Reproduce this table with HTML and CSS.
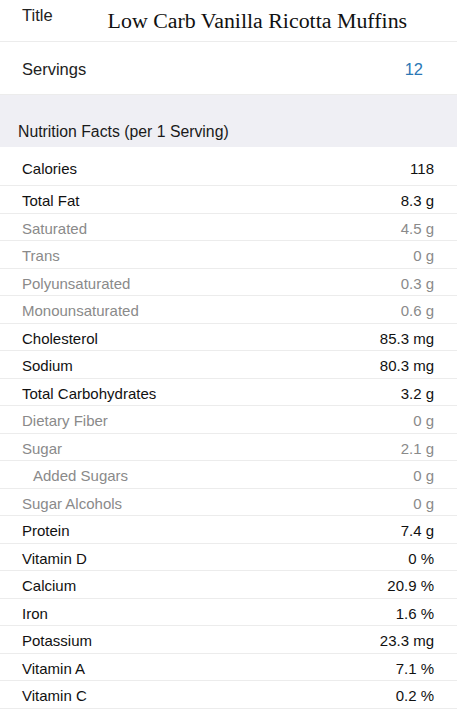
FILE: index.html
```html
<!DOCTYPE html>
<html>
<head>
<meta charset="utf-8">
<link rel="stylesheet" href="styles.css">
</head>
<body>
<div class="form">
  <div class="field title-field">
    <span class="field-label">Title</span>
    <span class="title-value">Low Carb Vanilla Ricotta Muffins</span>
  </div>
  <div class="field servings-field">
    <span class="field-label">Servings</span>
    <span class="servings-value">12</span>
  </div>
  <div class="section-header">Nutrition Facts (per 1 Serving)</div>
  <div class="facts">
    <div class="row calories"><span>Calories</span><span>118</span></div>
    <div class="row"><span>Total Fat</span><span>8.3 g</span></div>
    <div class="row sub"><span>Saturated</span><span>4.5 g</span></div>
    <div class="row sub"><span>Trans</span><span>0 g</span></div>
    <div class="row sub"><span>Polyunsaturated</span><span>0.3 g</span></div>
    <div class="row sub"><span>Monounsaturated</span><span>0.6 g</span></div>
    <div class="row"><span>Cholesterol</span><span>85.3 mg</span></div>
    <div class="row"><span>Sodium</span><span>80.3 mg</span></div>
    <div class="row"><span>Total Carbohydrates</span><span>3.2 g</span></div>
    <div class="row sub"><span>Dietary Fiber</span><span>0 g</span></div>
    <div class="row sub"><span>Sugar</span><span>2.1 g</span></div>
    <div class="row sub indent"><span>Added Sugars</span><span>0 g</span></div>
    <div class="row sub"><span>Sugar Alcohols</span><span>0 g</span></div>
    <div class="row"><span>Protein</span><span>7.4 g</span></div>
    <div class="row"><span>Vitamin D</span><span>0 %</span></div>
    <div class="row"><span>Calcium</span><span>20.9 %</span></div>
    <div class="row"><span>Iron</span><span>1.6 %</span></div>
    <div class="row"><span>Potassium</span><span>23.3 mg</span></div>
    <div class="row"><span>Vitamin A</span><span>7.1 %</span></div>
    <div class="row"><span>Vitamin C</span><span>0.2 %</span></div>
  </div>
</div>
</body>
</html>
```
FILE: styles.css
```css
* { box-sizing: border-box; }
html, body { margin: 0; padding: 0; background: #ffffff; }
body {
  font-family: "Liberation Sans", Arial, sans-serif;
  color: #141414;
  width: 457px;
  overflow: hidden;
}
.form { display: flex; flex-direction: column; }
.field {
  display: flex;
  align-items: center;
  padding: 0 34px 0 22px;
  border-bottom: 1px solid #ececec;
  background: #fff;
}
.field-label { font-size: 16.5px; color: #222; }
.title-field {
  height: 42px;
  align-items: flex-start;
  padding-top: 6px;
}
.title-value {
  font-family: "Liberation Serif", "Times New Roman", serif;
  font-size: 21.9px;
  color: #111;
  margin-left: 55px;
  padding-top: 2px;
  white-space: nowrap;
}
.servings-field {
  height: 53px;
  justify-content: space-between;
  padding-top: 3px;
}
.servings-value { font-size: 16.5px; color: #2b78b5; }
.section-header {
  height: 52px;
  background: #efeff4;
  display: flex;
  align-items: flex-end;
  padding: 0 0 6px 18px;
  font-size: 15.8px;
  color: #1a1a1a;
}
.facts { display: flex; flex-direction: column; }
.row {
  height: 27.5px;
  display: flex;
  justify-content: space-between;
  align-items: center;
  padding: 3px 23px 0 22px;
  border-bottom: 1px solid #ececec;
  font-size: 15px;
  color: #111;
}
.row.calories { height: 39px; padding-top: 4px; }
.row.sub { color: #8a8a8a; }
.row.indent { padding-left: 33px; }
```
